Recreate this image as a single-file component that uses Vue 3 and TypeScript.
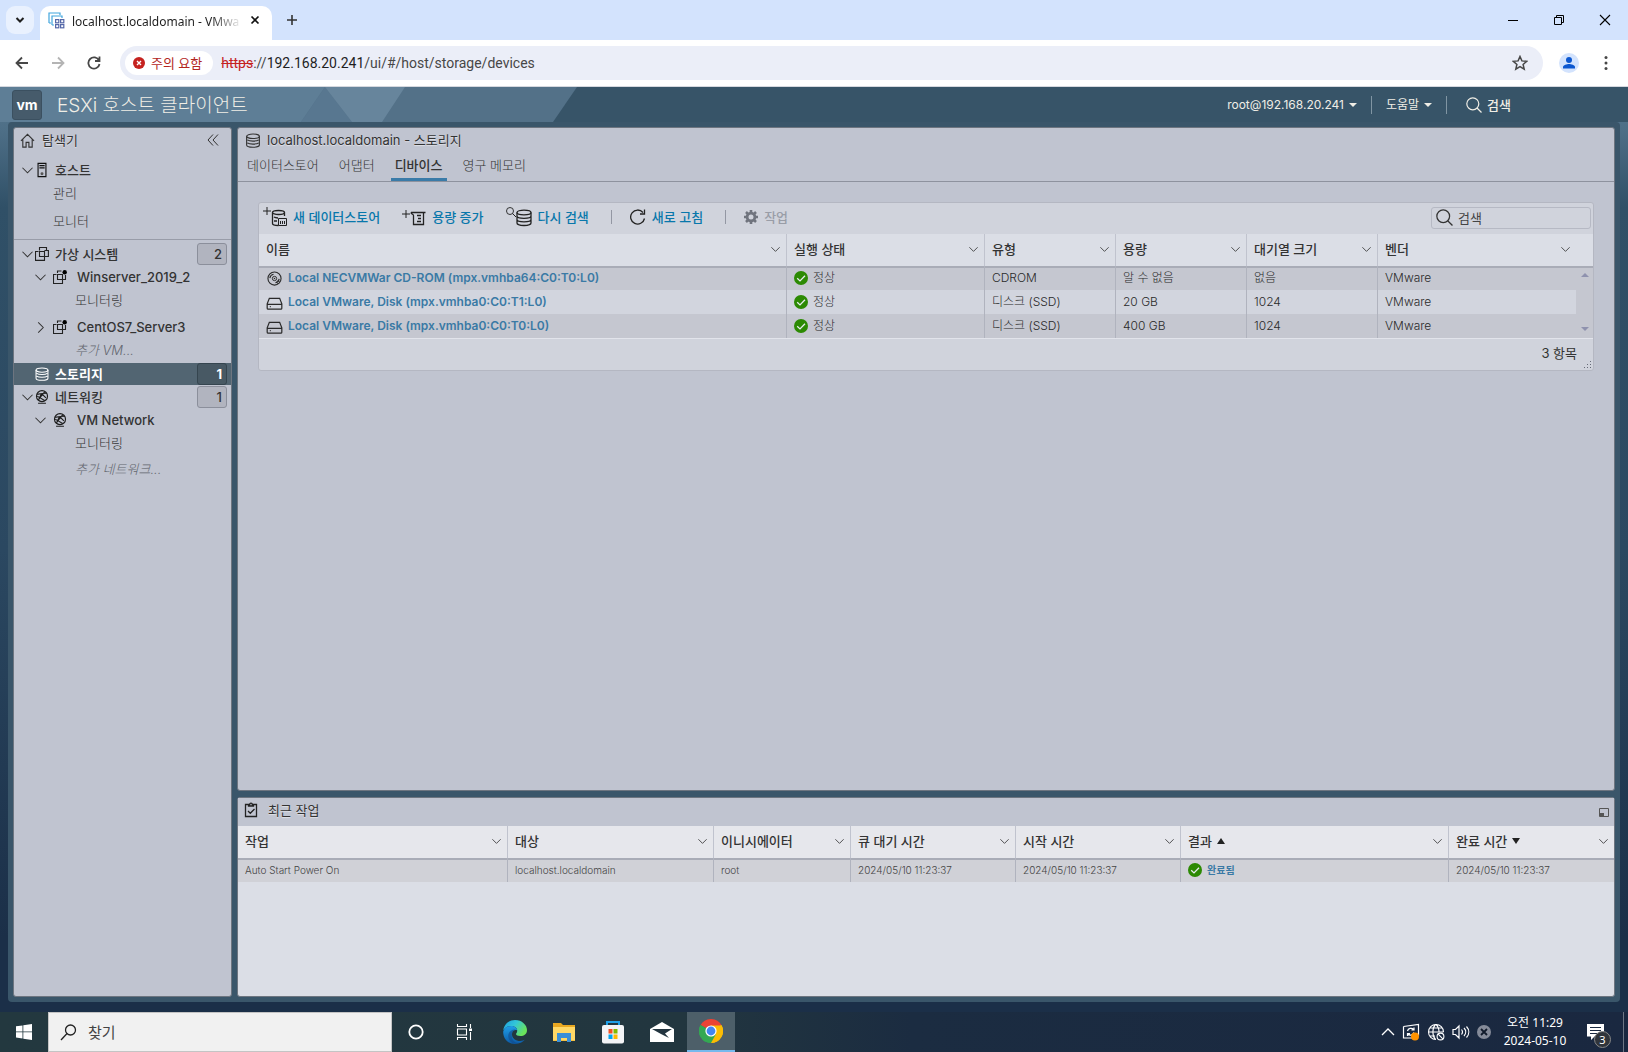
<script setup lang="ts">
interface NavRow {
  label: string
  kind: 'root' | 'child' | 'leaf' | 'deep'
  icon?: string
  open?: boolean
  badge?: number
  selected?: boolean
  add?: boolean
  spaced?: boolean
}

const hostRows: NavRow[] = [
  { label: '호스트', kind: 'root', icon: 'host', open: true },
  { label: '관리', kind: 'leaf' },
  { label: '모니터', kind: 'leaf', spaced: true },
]

const inventoryRows: NavRow[] = [
  { label: '가상 시스템', kind: 'root', icon: 'vm', open: true, badge: 2 },
  { label: 'Winserver_2019_2', kind: 'child', icon: 'vm-on', open: true },
  { label: '모니터링', kind: 'deep' },
  { label: 'CentOS7_Server3', kind: 'child', icon: 'vm-on', open: false, spaced: true },
  { label: '추가 VM...', kind: 'deep', add: true },
  { label: '스토리지', kind: 'root', icon: 'db', badge: 1, selected: true },
  { label: '네트워킹', kind: 'root', icon: 'net', open: true, badge: 1 },
  { label: 'VM Network', kind: 'child', icon: 'net', open: true },
  { label: '모니터링', kind: 'deep' },
  { label: '추가 네트워크...', kind: 'deep', add: true, spaced: true },
]

const tabs: string[] = ['데이터스토어', '어댑터', '디바이스', '영구 메모리']
const activeTab = '디바이스'

const deviceColumns: string[] = ['이름', '실행 상태', '유형', '용량', '대기열 크기', '벤더']
const devices = [
  { icon: 'cd', name: 'Local NECVMWar CD-ROM (mpx.vmhba64:C0:T0:L0)', status: '정상', type: 'CDROM', capacity: '알 수 없음', queue: '없음', vendor: 'VMware' },
  { icon: 'disk', name: 'Local VMware, Disk (mpx.vmhba0:C0:T1:L0)', status: '정상', type: '디스크 (SSD)', capacity: '20 GB', queue: '1024', vendor: 'VMware' },
  { icon: 'disk', name: 'Local VMware, Disk (mpx.vmhba0:C0:T0:L0)', status: '정상', type: '디스크 (SSD)', capacity: '400 GB', queue: '1024', vendor: 'VMware' },
]

const taskColumns = [
  { label: '작업', sort: '' },
  { label: '대상', sort: '' },
  { label: '이니시에이터', sort: '' },
  { label: '큐 대기 시간', sort: '' },
  { label: '시작 시간', sort: '' },
  { label: '결과', sort: 'asc' },
  { label: '완료 시간', sort: 'desc' },
]
</script>

<template>
  <div class="screen">
    <svg class="sprite" width="0" height="0" aria-hidden="true">
      <symbol id="i-chev" viewBox="0 0 12 12"><path d="M0.5 3l5.5 5.5L11.500 3" fill="none" stroke="currentColor" stroke-width="1.1" /></symbol>
      <symbol id="i-chev-r" viewBox="0 0 12 12"><path d="M3.500 0.500L9 6 3.500 11.500" fill="none" stroke="currentColor" stroke-width="1.100" /></symbol>
      <symbol id="i-home" viewBox="0 0 16 16"><path d="M1 8.500L8 1.500l7 7M3 7v8h3.500v-5h3v5H13V7" fill="none" stroke="currentColor" stroke-width="1.200" /></symbol>
      <symbol id="i-host" viewBox="0 0 16 16"><path d="M3.500 0.500h9v15h-9zM5 3h6M5 5.500h6" fill="none" stroke="#111" stroke-width="1.300" /><circle cx="8" cy="12.300" r="1.700" fill="#555" /></symbol>
      <symbol id="i-vm" viewBox="0 0 14 14"><path d="M4.500 3.500V.5h7v3M9.500 9.500h3.900v-6h-4M3.500 4.500H.5v8.900h9V9.500M4.500 4.500h5v5h-5zM4.500 4.500V9.500" fill="none" stroke="#222" stroke-width="1.100" /></symbol>
      <symbol id="i-vm-on" viewBox="0 0 14 14"><path d="M4.500 3V1h4M12.500 5v4.500H10M3.500 4.500H.5v9h9V9.500M4.500 4.500h5v5h-5z" fill="none" stroke="#222" stroke-width="1.100" /><circle cx="11.700" cy="2.200" r="2.200" fill="#000" /></symbol>
      <symbol id="i-db" viewBox="0 0 16 16"><g fill="none" stroke="currentColor" stroke-width="1.200"><ellipse cx="8" cy="3.500" rx="6.800" ry="2.400" /><path d="M1.200 3.500v9.300c0 1.200 3 2.400 6.800 2.400s6.800-1.200 6.800-2.400V3.500M2 7.300c1 .8 3 1.300 6 1.300s5-.5 6-1.300M2 10.500c1 .8 3 1.300 6 1.300s5-.5 6-1.300" /></g></symbol>
      <symbol id="i-net" viewBox="0 0 16 16"><g fill="none" stroke="#1c1c1c" stroke-width="1.300"><circle cx="8" cy="7" r="6.300" /><path d="M2.500 5l5-1 5 5M7.500 4l5.500-.5M7.500 4L4 11.500M2.500 7L11 12M11 2L4 11M3.500 15.200h9" /></g></symbol>
      <symbol id="i-cd" viewBox="0 0 16 16"><g fill="none" stroke="currentColor"><circle cx="8" cy="8" r="7" stroke-width="1.200" /><circle cx="8" cy="8" r="2.300" /><path d="M3 7.500a5 5 0 0 1 4-4M13 8.500a5 5 0 0 1-4 4M11.300 10l2 1.500M10 11.300l1.500 2" stroke-width="1.200" /></g><circle cx="8" cy="8" r=".8" fill="currentColor" /></symbol>
      <symbol id="i-disk" viewBox="0 0 18 16"><path d="M3.500 3.500h11l2.300 6v4.500a1 1 0 0 1-1 1H2.200a1 1 0 0 1-1-1V9.500zM1.200 10h15.600M4 12.500h1" fill="none" stroke="currentColor" stroke-width="1.300" /></symbol>
      <symbol id="i-ok" viewBox="0 0 14 14"><circle cx="7" cy="7" r="7" fill="#2c8a03" /><path d="M3.200 7.200l2.800 2.700 5-5.200" fill="none" stroke="#e9edf0" stroke-width="1.300" /></symbol>
      <symbol id="i-search" viewBox="0 0 16 16"><g fill="none" stroke="currentColor" stroke-width="1.200"><circle cx="6.800" cy="6.800" r="6" /><path d="M11 11l4.500 4.500" /></g></symbol>
    </svg>

    <div class="tabstrip">
      <button class="tab-search" aria-label="탭 검색">
        <svg width="12" height="12" viewBox="0 0 12 12"><path d="M2.500 4L6 7.500 9.500 4" fill="none" stroke="#1f1f1f" stroke-width="2" /></svg>
      </button>
      <div class="browser-tab">
        <svg width="17" height="17" viewBox="0 0 17 17" fill="none">
          <path d="M1 11V1h11v2M4 13V4h10v2M4 13h2" stroke="#41a5dd" stroke-width="1.200" />
          <path d="M1 11h2" stroke="#41a5dd" />
          <g stroke="#5568a8" stroke-width="1.200"><rect x="7.600" y="7.600" width="3.200" height="3.200" /><rect x="12.600" y="7.600" width="3.200" height="3.200" /><rect x="7.600" y="12.600" width="3.200" height="3.200" /><rect x="12.600" y="12.600" width="3.200" height="3.200" /></g>
        </svg>
        <span class="tab-title">localhost.localdomain - VMwa</span>
        <button class="plain" aria-label="닫기"><svg width="10" height="10" viewBox="0 0 10 10"><path d="M1.500 1.500l7 7M8.500 1.500l-7 7" stroke="#111" stroke-width="1.700" /></svg></button>
      </div>
      <button class="plain new-tab" aria-label="새 탭"><svg width="12" height="12" viewBox="0 0 12 12"><path d="M6 1v10M1 6h10" stroke="#333" stroke-width="1.600" /></svg></button>
      <div class="window-buttons">
        <button class="plain" aria-label="최소화"><svg width="12" height="12" viewBox="0 0 12 12"><path d="M1 6.500h10" stroke="#000" /></svg></button>
        <button class="plain" aria-label="이전 크기로"><svg width="12" height="12" viewBox="0 0 12 12"><path d="M1.500 3.500h7v7h-7zM3.500 3.500v-2h7v7h-2" fill="none" stroke="#000" /></svg></button>
        <button class="plain" aria-label="창 닫기"><svg width="12" height="12" viewBox="0 0 12 12"><path d="M1 1l10 10M11 1L1 11" stroke="#000" stroke-width="1.100" /></svg></button>
      </div>
    </div>

    <div class="toolbar">
      <button class="plain" aria-label="뒤로"><svg width="14" height="14" viewBox="0 0 14 14"><path d="M13 7H2M7 1.500L1.500 7 7 12.500" fill="none" stroke="#474747" stroke-width="1.800" /></svg></button>
      <button class="plain" aria-label="앞으로"><svg width="14" height="14" viewBox="0 0 14 14"><path d="M1 7h11M7 1.500L12.500 7 7 12.500" fill="none" stroke="#b4b4b4" stroke-width="1.800" /></svg></button>
      <button class="plain" aria-label="새로고침"><svg width="14" height="14" viewBox="0 0 14 14"><path d="M12 4.500A5.600 5.600 0 1 0 12.500 8M12.500 0.500v4.500H8" fill="none" stroke="#474747" stroke-width="1.800" /></svg></button>
      <div class="omnibox">
        <button class="warn">
          <svg width="12" height="12" viewBox="0 0 12 12"><circle cx="6" cy="6" r="6" fill="#c5221f" /><path d="M4 4l4 4M8 4L4 8" stroke="#fff" stroke-width="1.400" /></svg>
          주의 요함
        </button>
        <span class="url"><s>https</s>://<b>192.168.20.241</b>/ui/#/host/storage/devices</span>
        <svg class="star" width="16" height="16" viewBox="0 0 16 16"><path d="M8 1.500l1.900 4.400 4.800.4-3.600 3.100 1.100 4.700L8 11.600l-4.200 2.500 1.100-4.700L1.300 6.300l4.800-.4z" fill="none" stroke="#474747" stroke-width="1.500" /></svg>
      </div>
      <svg class="avatar" width="20" height="20" viewBox="0 0 20 20"><circle cx="10" cy="10" r="10" fill="#d3e3fd" /><circle cx="10" cy="7" r="3" fill="#0b57d0" /><path d="M4 15.500v-1.500c0-2 4-3 6-3s6 1 6 3v1.500z" fill="#0b57d0" /></svg>
      <svg width="4" height="16" viewBox="0 0 4 16" fill="#474747"><circle cx="2" cy="2.500" r="1.500" /><circle cx="2" cy="8" r="1.500" /><circle cx="2" cy="13.500" r="1.500" /></svg>
    </div>

    <div class="client">
      <header class="banner">
        <svg class="banner-art" width="577" height="35" viewBox="0 0 577 35" preserveAspectRatio="none">
          <path d="M0 0h577l-24 35H0z" fill="#537188" />
          <path d="M0 0h325l-24 35H0z" fill="#5e7e96" />
          <path d="M325 0l27 35h-51z" fill="#587790" />
          <path d="M325 0h80l-23 35h-30z" fill="#67859c" />
        </svg>
        <span class="logo">vm</span>
        <h1>ESXi 호스트 클라이언트</h1>
        <nav class="banner-nav">
          <button>root@192.168.20.241 <i class="caret"></i></button>
          <button>도움말 <i class="caret"></i></button>
          <button class="find"><svg width="16" height="16"><use href="#i-search" /></svg>검색</button>
        </nav>
      </header>

      <div class="workspace">
        <aside class="panel navigator">
          <div class="nav-title">
            <svg width="15" height="15"><use href="#i-home" /></svg>
            <span>탐색기</span>
            <button class="plain" aria-label="접기"><svg width="12" height="12" viewBox="0 0 12 12"><path d="M6 0.500L1 6l5 5.500M11 0.500L6 6l5 5.500" fill="none" stroke="#333" /></svg></button>
          </div>
          <template v-for="(group, g) in [hostRows, inventoryRows]" :key="g">
            <ul class="tree">
              <li v-for="(row, i) in group" :key="i" :class="[row.kind, { selected: row.selected, add: row.add, spaced: row.spaced }]">
                <svg v-if="row.icon" class="twist" width="11" height="11"><use v-if="row.open !== undefined" :href="row.open ? '#i-chev' : '#i-chev-r'" /></svg>
                <svg v-if="row.icon" class="glyph" width="14" :height="row.icon === 'host' ? 16 : 14"><use :href="'#i-' + row.icon" /></svg>
                <a href="#">{{ row.label }}</a>
                <span v-if="row.badge" class="badge">{{ row.badge }}</span>
              </li>
            </ul>
          </template>
        </aside>

        <div class="column">
          <main class="panel content">
            <div class="content-title"><svg width="16" height="15"><use href="#i-db" /></svg>localhost.localdomain - 스토리지</div>
            <div class="tabs">
              <button v-for="t in tabs" :key="t" :class="{ active: t === activeTab }">{{ t }}</button>
            </div>
            <section class="grid">
              <div class="actions">
                <button>
                  <svg width="24" height="20" viewBox="0 0 24 20" fill="none" stroke="#222"><path d="M4 0v8M0 4h8" /><ellipse cx="15.500" cy="5.500" rx="6" ry="2" stroke-width="1.300" /><path d="M9.500 5.500v11c0 1 2 2 6 2M21.500 5.500V9M11 10c1 .7 2 .9 4 1M11 14h3" stroke-width="1.300" /><path d="M15.500 11.500h8v7h-8zM17.500 14v3M19.500 14v3M21.500 14v3" /></svg>
                  새 데이터스토어
                </button>
                <button>
                  <svg width="24" height="20" viewBox="0 0 24 20" fill="none" stroke="#222"><path d="M4 3v8M0 7h8" /><path d="M9 5.500h14.500M9 5.500c0 2 2.500 1.500 2.500 3v9h10v-12M15 8.500h4M16 11.500h3M15 14.500h4" stroke-width="1.300" /></svg>
                  용량 증가
                </button>
                <button>
                  <svg width="26" height="20" viewBox="0 0 26 20" fill="none" stroke="#222"><circle cx="4" cy="4" r="3.500" stroke-width=".9" /><path d="M6.500 6.500L10 10" /><ellipse cx="18" cy="5.500" rx="7" ry="2.300" stroke-width="1.300" /><path d="M11 5.500V16c0 1.300 3 2.500 7 2.500s7-1.200 7-2.500V5.500M11 9c0 1.300 3 2.300 7 2.300s7-1 7-2.300M11 12.500c0 1.300 3 2.300 7 2.300s7-1 7-2.300" stroke-width="1.300" /></svg>
                  다시 검색
                </button>
                <i class="rule"></i>
                <button>
                  <svg width="16" height="16" viewBox="0 0 16 16"><path d="M14.500 9.500A7 7 0 1 1 13 3.500M14.500 0.500v4.500H10" fill="none" stroke="#222" stroke-width="1.300" /></svg>
                  새로 고침
                </button>
                <i class="rule"></i>
                <button disabled>
                  <svg width="14" height="14" viewBox="0 0 14 14"><circle cx="7" cy="7" r="3.900" fill="none" stroke="#70747e" stroke-width="2.800" /><path d="M7 0v2.500M7 11.500V14M0 7h2.500M11.500 7H14M2 2l1.800 1.800M10.200 10.200L12 12M12 2l-1.800 1.800M3.800 10.200L2 12" stroke="#70747e" stroke-width="2.600" /></svg>
                  작업
                </button>
                <label class="search"><svg width="17" height="17"><use href="#i-search" /></svg><input type="text" placeholder="검색" aria-label="검색" /></label>
              </div>
              <table class="devices">
                <colgroup><col class="c-name" /><col class="c-status" /><col class="c-small" /><col class="c-small" /><col class="c-small" /><col /><col class="c-scroll" /></colgroup>
                <thead>
                  <tr>
                    <th v-for="c in deviceColumns" :key="c"><div class="head">{{ c }}<svg width="9" height="9"><use href="#i-chev" /></svg></div></th>
                    <th></th>
                  </tr>
                </thead>
                <tbody>
                  <tr v-for="(d, i) in devices" :key="d.name">
                    <td><div class="cell"><svg :class="d.icon" width="17" height="15"><use :href="'#i-' + d.icon" /></svg><a href="#">{{ d.name }}</a></div></td>
                    <td><div class="cell"><svg width="14" height="14"><use href="#i-ok" /></svg>{{ d.status }}</div></td>
                    <td>{{ d.type }}</td>
                    <td>{{ d.capacity }}</td>
                    <td>{{ d.queue }}</td>
                    <td>{{ d.vendor }}</td>
                    <td v-if="i === 0" rowspan="3" class="scroll"><div><i class="up"></i><i class="down"></i></div></td>
                  </tr>
                </tbody>
              </table>
              <div class="grid-foot">3 항목
                <svg class="grip" width="8" height="8" viewBox="0 0 8 8" fill="#666b78"><path d="M6 0h1v1H6zM3 3h1v1H3zM6 3h1v1H6zM0 6h1v1H0zM3 6h1v1H3zM6 6h1v1H6z" /></svg>
              </div>
            </section>
          </main>

          <section class="panel tasks">
            <div class="tasks-title">
              <svg width="14" height="16" viewBox="0 0 14 16" fill="none" stroke="#222" stroke-width="1.300"><path d="M4 2.500H1.500v12h11v-12H10M4.500 4V2.500h1.200a1.300 1.300 0 0 1 2.600 0h1.200V4zM4 9l2.300 2.300L10.500 7" /></svg>
              <span>최근 작업</span>
              <button class="plain" aria-label="크기 조정"><svg width="10" height="9" viewBox="0 0 10 9"><path d="M.5.500h9v8h-9z" fill="none" stroke="#555" /><path d="M1 5h4v3H1z" fill="#555" /></svg></button>
            </div>
            <table class="task-table">
              <colgroup><col class="t-name" /><col class="t-target" /><col class="t-init" /><col class="t-time" /><col class="t-time" /><col class="t-result" /><col /></colgroup>
              <thead>
                <tr>
                  <th v-for="c in taskColumns" :key="c.label"><div class="head">{{ c.label }}<i v-if="c.sort" :class="['sort', c.sort]"></i><svg width="9" height="9"><use href="#i-chev" /></svg></div></th>
                </tr>
              </thead>
              <tbody>
                <tr>
                  <td>Auto Start Power On</td>
                  <td>localhost.localdomain</td>
                  <td>root</td>
                  <td>2024/05/10 11:23:37</td>
                  <td>2024/05/10 11:23:37</td>
                  <td><div class="cell"><svg width="14" height="14"><use href="#i-ok" /></svg><a href="#">완료됨</a></div></td>
                  <td>2024/05/10 11:23:37</td>
                </tr>
              </tbody>
            </table>
          </section>
        </div>
      </div>
    </div>

    <footer class="taskbar">
      <button class="start" aria-label="시작"><svg width="16" height="16" viewBox="0 0 16 16" fill="#fff"><path d="M0 2.300l6.500-.9v6.100H0zM7.300 1.300L16 0v7.500H7.300zM0 8.300h6.500v6.200L0 13.600zM7.300 8.300H16V16l-8.700-1.300z" /></svg></button>
      <label class="taskbar-search"><svg width="17" height="17" viewBox="0 0 17 17"><g fill="none" stroke="#222" stroke-width="1.300"><circle cx="10.500" cy="6" r="5" /><path d="M7 9.500L1 16" /></g></svg><input type="text" placeholder="찾기" aria-label="찾기" /></label>
      <button aria-label="Cortana"><svg width="16" height="16" viewBox="0 0 16 16"><circle cx="8" cy="8" r="6.700" fill="none" stroke="#fff" stroke-width="1.800" /></svg></button>
      <button aria-label="작업 보기"><svg width="17" height="16" viewBox="0 0 17 16" fill="none" stroke="#fff" stroke-width="1.100"><path d="M1.500 0v2.500h9V0M1.500 5h9v6h-9zM1.500 16v-2.500h9V16M14.500 0v4M14.500 8v8" /><path d="M13 4.500h3v2.500h-3z" fill="#fff" stroke="none" /></svg></button>
      <div class="apps">
        <button aria-label="Edge">
          <svg width="24" height="24" viewBox="0 0 24 24">
            <defs>
              <linearGradient id="eg1" x1="0" y1="0" x2="1" y2=".5"><stop offset="0" stop-color="#1b9de2" /><stop offset=".5" stop-color="#33c6d8" /><stop offset="1" stop-color="#6ae35a" /></linearGradient>
              <linearGradient id="eg2" x1="0" y1="0" x2="0" y2="1"><stop offset="0" stop-color="#1f9ee8" /><stop offset="1" stop-color="#0c59a4" /></linearGradient>
            </defs>
            <path d="M.3 10.500C1 4.500 6 0 12 0c7 0 12 5 12 10 0 4-3 6-6.500 6-3 0-4.500-1-4.500-2 0-.8 1.200-1 1.200-3.200C14.200 8 11.500 6 8 6 4 6 1.300 8.500.3 10.500z" fill="url(#eg1)" />
            <path d="M.2 11.500C1 8.500 4 6 8 6c3.500 0 6 2 6.200 4.500C13 9.500 9 10 9 14.500c0 4 4 6.500 8 6.500 2.500 0 4-.8 4.800-1.200C20 22 16.500 24 12 24 5 24 0 18.500.2 11.500z" fill="url(#eg2)" />
            <path d="M9 14.500c-1 4 2 8 6 9-6 1.500-11-4-9.500-9.500C6.500 10.500 10 9 13 9.500c-2.500.5-4 2.500-4 5z" fill="#114a8b" opacity=".6" />
          </svg>
        </button>
        <button aria-label="파일 탐색기"><svg width="22" height="20" viewBox="0 0 22 20"><path d="M0 1h8l2 2h12v16H0z" fill="#e9a821" /><path d="M0 5h22v13.500H0z" fill="#ffd866" /><path d="M4 11h14v9h-4v-4H8v4H4z" fill="#3a8fd8" /></svg></button>
        <button aria-label="Store"><svg width="24" height="24" viewBox="0 0 24 24"><path d="M6 8V2h12v6" fill="none" stroke="#1fa0e8" stroke-width="2" /><rect x="1" y="5" width="22" height="18.500" rx="2" fill="#f3f4f6" /><path d="M7.500 9h4v4.500h-4z" fill="#f25022" /><path d="M12.500 9h4v4.500h-4z" fill="#7fba00" /><path d="M7.500 14.500h4V19h-4z" fill="#00a4ef" /><path d="M12.500 14.500h4V19h-4z" fill="#ffb900" /></svg></button>
        <button aria-label="메일"><svg width="24" height="20" viewBox="0 0 24 20"><path d="M0 7L12 0l12 7v13H0z" fill="#fff" /><path d="M2 7l20 0-7 4.500 4 4.500-8-4z" fill="#22343f" /></svg></button>
        <button class="running" aria-label="Chrome"><svg width="24" height="24" viewBox="0 0 24 24"><path d="M12 12L1.600 6A12 12 0 0 1 22.400 6z" fill="#ea4335" /><path d="M12 12L22.400 6A12 12 0 0 1 12 24z" fill="#fbbc04" /><path d="M12 12v12A12 12 0 0 1 1.600 6z" fill="#34a853" /><path d="M12 6.500h10.700A12 12 0 0 1 12 24l5-9z" fill="#fbbc04" /><path d="M1.600 6l5.200 9L12 17.500l5-2.500-5 9A12 12 0 0 1 1.600 6z" fill="#34a853" /><circle cx="12" cy="12" r="5.600" fill="#fff" /><circle cx="12" cy="12" r="4.400" fill="#4285f4" /></svg></button>
      </div>
      <div class="tray">
        <svg width="14" height="16" viewBox="0 0 14 16"><path d="M1 11l6-6 6 6" fill="none" stroke="#fff" stroke-width="1.300" /></svg>
        <svg width="18" height="18" viewBox="0 0 18 18"><path d="M1.500 3.500L16.500 1.500v11M1.500 3.500v11.500H11" fill="none" stroke="#fff" stroke-width="1.200" /><path d="M5.500 8a3.500 3.500 0 0 1 6-1.500M12 4.500v2.500H9.500M11.800 9.500a3.500 3.500 0 0 1-6 1.500M5.500 13v-2.300H8" fill="none" stroke="#fff" stroke-width="1.200" /><circle cx="13" cy="13.500" r="4" fill="#ff9300" /></svg>
        <svg width="18" height="18" viewBox="0 0 18 18" fill="none" stroke="#fff" stroke-width="1.100"><path d="M9 16.500A7.500 7.500 0 1 1 16.500 9M8.500 1.500C5 5 5 13 8.500 16.500M9 1.500c2.200 2 3 4.500 3 7.500M1.500 9h15M2.500 5h13M2.500 13H8" /><circle cx="13.500" cy="13.500" r="3.400" /><path d="M11.200 11.200l4.600 4.600" /></svg>
        <svg width="18" height="16" viewBox="0 0 18 16" fill="none" stroke="#fff" stroke-width="1.200"><path d="M1 5.500h2.500L7 2v12l-3.500-3.500H1zM9.500 5.500c1.200 1.500 1.200 3.500 0 5M12 4c2.200 2.300 2.200 5.700 0 8M14.500 2.500c3 3.300 3 7.700 0 11" /></svg>
        <svg width="14" height="14" viewBox="0 0 14 14"><circle cx="7" cy="7" r="7" fill="#858b99" /><path d="M4 4l6 6M10 4l-6 6" stroke="#111b2b" stroke-width="1.800" /></svg>
      </div>
      <div class="clock"><span>오전 11:29</span><span>2024-05-10</span></div>
      <button class="notice" aria-label="알림"><svg width="17" height="16" viewBox="0 0 17 16"><path d="M0 0h17v12.500H7.500L4 16v-3.500H0z" fill="#fff" /><path d="M3 3.500h11M3 6.500h11M3 9.500h8" stroke="#1b2a42" /></svg><span>3</span></button>
      <i class="peek"></i>
    </footer>
  </div>
</template>

<style>
html,
body {
  margin: 0;
}
</style>

<style scoped>
.screen {
  display: flex;
  flex-direction: column;
  min-height: 100vh;
  overflow: hidden;
  font-family: Inter, "Noto Sans CJK KR", sans-serif;
  font-size: 13px;
  line-height: 18px;
  color: #333;
}
.screen *,
.screen *::before {
  box-sizing: border-box;
}
.sprite {
  position: absolute;
}
svg {
  flex: none;
  display: block;
}
button {
  font: inherit;
  color: inherit;
  background: none;
  border: 0;
  padding: 0;
  white-space: nowrap;
}
a {
  color: inherit;
  text-decoration: none;
}
.plain {
  display: flex;
}

/* browser frame */
.tabstrip {
  display: flex;
  height: 40px;
  padding-left: 6px;
  background: #d3e3fd;
  font-family: "Noto Sans", "Noto Sans CJK KR", sans-serif;
  font-size: 12px;
}
.tab-search {
  display: flex;
  align-items: center;
  justify-content: center;
  width: 28px;
  height: 28px;
  margin-top: 6px;
  border-radius: 9px;
  background: #e9f1fe;
}
.browser-tab {
  display: flex;
  align-items: center;
  width: 232px;
  height: 34px;
  margin: 6px 14px 0 6px;
  padding: 0 12px 6px 8px;
  border-radius: 10px 10px 0 0;
  background: #fff;
}
.tab-title {
  flex: 1;
  margin: 3px 8px 0 7px;
  color: #1f1f1f;
  white-space: nowrap;
  mask-image: linear-gradient(90deg, #000 82%, transparent);
}
.new-tab {
  margin-top: 14px;
}
.window-buttons {
  display: flex;
  gap: 34px;
  margin: 14px 17px 0 auto;
}
.toolbar {
  display: flex;
  align-items: center;
  height: 47px;
  padding: 0 20px 1px 15px;
  background: #fff;
  border-bottom: 1px solid #d5d8df;
}
.toolbar > .plain {
  margin-right: 22px;
}
.omnibox {
  display: flex;
  flex: 1;
  align-items: center;
  height: 34px;
  padding: 0 15px 0 5px;
  border-radius: 17px;
  background: #ebeef8;
  font-family: "Noto Sans", "Noto Sans CJK KR", sans-serif;
}
.toolbar > .plain + .omnibox {
  margin-left: -3px;
}
.warn {
  display: flex;
  align-items: center;
  gap: 6px;
  height: 24px;
  padding: 0 11px 0 8px;
  border-radius: 12px;
  background: #fff;
  color: #b3261e;
}
.url {
  flex: 1;
  margin-left: 8px;
  color: #474747;
  font-family: Roboto, sans-serif;
  font-size: 14px;
}
.url s {
  color: #c5221f;
}
.url b {
  color: #1f1f1f;
  font-weight: 400;
}
.avatar {
  margin: 0 25px 0 16px;
}

/* host client */
.client {
  display: flex;
  flex: 1;
  flex-direction: column;
  padding: 0 8px 10px;
  background: linear-gradient(#58788f 0, #4d6e86 45px, #305067 120px, #2b4861 50%, #1b2f48 92%);
}
.banner {
  position: relative;
  display: flex;
  align-items: center;
  height: 35px;
  margin: 0 -8px;
  padding: 0 117px 0 12px;
  background: #375468;
  color: #f0eee6;
}
.banner-art {
  position: absolute;
  top: 0;
  left: 0;
}
.logo {
  position: relative;
  width: 30px;
  height: 30px;
  border: 1px solid #3b5060;
  border-radius: 3px;
  background: #465b6b;
  color: #fff;
  font-size: 14px;
  font-weight: 700;
  line-height: 27px;
  text-align: center;
}
h1 {
  position: relative;
  margin: 0 0 0 15px;
  padding-top: 2px;
  font-size: 19px;
  font-weight: 300;
  line-height: 24px;
}
.banner-nav {
  display: flex;
  align-items: center;
  margin-left: auto;
  font-size: 12px;
  text-shadow: 0 1px 1px #1c2f3c;
}
.banner-nav button {
  display: flex;
  align-items: center;
  height: 18px;
  padding: 0 14px;
  border-right: 1px solid #8095a3;
}
.banner-nav button.find {
  gap: 5px;
  padding: 0 0 0 19px;
  border: 0;
  font-weight: 500;
  font-size: 13px;
}
.caret {
  margin-left: 5px;
  border: 4px solid transparent;
  border-top-color: #f0eee6;
  border-bottom: 0;
}
.workspace {
  display: flex;
  flex: 1;
  gap: 5px;
  padding: 5px;
  border-radius: 4px;
  background: #3a566a;
}
.panel {
  border: 1px solid #6d7580;
  border-radius: 3px;
  background: #c0c4d0;
}
.column {
  display: flex;
  flex: 1;
  flex-direction: column;
  gap: 6px;
  min-width: 0;
}
.navigator {
  width: 219px;
}
.nav-title {
  display: flex;
  align-items: center;
  gap: 7px;
  height: 24px;
  margin-bottom: 7px;
  padding: 0 12px 0 6px;
  text-shadow: 0 1px 1px #fff8;
}
.nav-title .plain {
  margin-left: auto;
}
.tree {
  margin: 0;
  padding: 0;
  list-style: none;
}
.tree + .tree {
  margin-top: 6px;
  padding-top: 3px;
  border-top: 1px solid #989ca8;
}
.tree li {
  display: flex;
  align-items: center;
  height: 22px;
  padding-left: 8px;
  font-weight: 500;
}
.tree li.child {
  height: 24px;
  padding-left: 21px;
}
.tree li.leaf {
  height: 24px;
  padding-left: 39px;
  font-weight: 300;
}
.tree li.deep {
  padding-left: 61px;
  font-weight: 300;
}
.tree li.spaced {
  margin-top: 4px;
}
.tree .glyph {
  margin: 0 6px 0 2px;
}
.tree .child .twist {
  margin-right: 5px;
}
.tree .child .glyph {
  margin-right: 10px;
}
.tree li.add {
  color: #63666f;
  font-style: italic;
}
.tree li.selected {
  margin: 2px 0 1px;
  background: #526572;
  color: #fff;
  font-weight: 700;
}
.badge {
  width: 30px;
  height: 22px;
  margin: 0 4px 0 auto;
  padding-right: 4px;
  border: 1px solid #8b8f9b;
  border-radius: 3px;
  background: #b1b4bf;
  line-height: 20px;
  text-align: right;
}
.selected .badge {
  border-color: #35454f;
  background: #485964;
}

/* main content */
.content {
  flex: 1;
}
.content-title {
  display: flex;
  align-items: center;
  gap: 6px;
  height: 24px;
  padding-left: 7px;
  text-shadow: 0 1px 1px #fff8;
}
.tabs {
  display: flex;
  gap: 12px;
  height: 30px;
  padding-left: 5px;
  border-bottom: 1px solid #8e929e;
}
.tabs button {
  padding: 0 4px 1px;
  border-bottom: 3px solid transparent;
  font-weight: 300;
}
.tabs .active {
  border-bottom-color: #3a7ba8;
  font-weight: 500;
}
.grid {
  margin: 20px 20px 0;
  border: 1px solid #b4b7c2;
  border-radius: 3px;
  background: #d0d3dc;
}
.actions {
  display: flex;
  align-items: center;
  gap: 22px;
  height: 31px;
  padding: 0 2px 4px 4px;
}
.actions button {
  display: flex;
  align-items: center;
  gap: 6px;
  color: #0877ab;
  font-weight: 500;
}
.actions button:disabled {
  color: #999da7;
}
.rule {
  width: 1px;
  height: 14px;
  margin-right: -4px;
  background: #9397a3;
}
.search {
  display: flex;
  align-items: center;
  gap: 5px;
  width: 160px;
  height: 22px;
  margin: 2px 0 0 auto;
  padding-left: 4px;
  border: 1px solid #b6b9c4;
  border-radius: 3px;
}
input {
  flex: 1;
  min-width: 0;
  padding: 0;
  border: 0;
  outline: 0;
  background: none;
  font: inherit;
}
input::placeholder {
  color: #444;
  opacity: 1;
}
table {
  width: 100%;
  border-collapse: separate;
  border-spacing: 0;
  table-layout: fixed;
}
th,
td {
  padding: 0 6px 0 7px;
  border-right: 1px solid #b0b3be;
  text-align: left;
  white-space: nowrap;
}
th {
  height: 32px;
  padding-bottom: 2px;
  border-color: #c0c3ce;
  background: #dbdee6;
  font-weight: 500;
}
th:last-child,
td:last-child {
  border-right: 0;
}
.head {
  display: flex;
  align-items: center;
}
.head svg {
  margin-left: auto;
}
td {
  height: 24px;
  color: #2a2a2a;
  font-weight: 300;
  font-size: 12px;
}
tbody tr:first-child td {
  box-shadow: inset 0 2px #a9acb7;
}
.cell {
  display: flex;
  align-items: center;
  gap: 5px;
}
.cell a {
  color: #3a7aa5;
  font-weight: 600;
}
.c-name { width: 528px; }
.c-status { width: 198px; }
.c-small { width: 131px; }
.c-scroll { width: 17px; }
.devices th:nth-last-child(2) {
  border-right: 0;
}
.devices tbody tr {
  background: #c5c7d0;
}
.devices tbody tr:nth-child(2) {
  background: #d2d5de;
}
.devices td:nth-child(6),
.devices tr:nth-child(n + 2) td:last-child {
  border-right: 0;
}
.devices td.scroll {
  height: 72px;
  padding: 0;
}
.scroll div {
  display: flex;
  flex-direction: column;
  align-items: center;
  justify-content: space-between;
  height: 72px;
  padding: 7px 0;
}
.up,
.down {
  border: 4px solid transparent;
}
.up {
  border-top: 0;
  border-bottom-color: #8f92ae;
}
.down {
  border-bottom: 0;
  border-top-color: #8f92ae;
}
.grid-foot {
  position: relative;
  height: 32px;
  padding-right: 16px;
  border-top: 1px solid #e2e4eb;
  line-height: 28px;
  text-align: right;
}
.grip {
  position: absolute;
  right: 1px;
  bottom: 1px;
}

/* recent tasks */
.tasks {
  height: 200px;
  background: #dbdee6;
}
.tasks-title {
  display: flex;
  align-items: center;
  gap: 10px;
  height: 28px;
  padding: 0 5px 4px 6px;
  background: #c0c4d0;
  text-shadow: 0 1px 1px #fff8;
}
.tasks-title .plain {
  margin: 4px 0 0 auto;
}
.task-table th {
  background: #e6e7ec;
}
.task-table td {
  padding-bottom: 1px;
  background: #d0d1d7;
  color: #444;
  font-size: 10px;
}
.t-name { width: 270px; }
.t-target { width: 206px; }
.t-init { width: 137px; }
.t-time { width: 165px; }
.t-result { width: 268px; }
.sort {
  margin-left: 5px;
  border: 4px solid transparent;
}
.asc {
  border-top: 0;
  border-bottom: 6px solid #222;
}
.desc {
  border-bottom: 0;
  border-top: 6px solid #222;
}

/* desktop taskbar */
.taskbar {
  display: flex;
  height: 40px;
  background: linear-gradient(90deg, #23383f, #22363f 42%, #1b2c41 56%, #1a2840);
  color: #fff;
  font-family: "Noto Sans", "Noto Sans CJK KR", sans-serif;
}
.taskbar > button,
.apps button {
  display: flex;
  align-items: center;
  justify-content: center;
  width: 48px;
}
.taskbar-search {
  display: flex;
  align-items: center;
  gap: 11px;
  width: 344px;
  padding-left: 11px;
  border: 1px solid #c4c4c4;
  background: #f1f1f1;
  font-size: 15px;
}
.apps {
  display: flex;
  gap: 1px;
  margin-left: 3px;
}
.apps .running {
  border-bottom: 2px solid #76b9ed;
  background: #4d5f69;
}
.tray {
  display: flex;
  align-items: center;
  gap: 7px;
  margin: 0 10px 0 auto;
}
.clock {
  display: flex;
  flex-direction: column;
  justify-content: center;
  width: 68px;
  font-size: 12px;
  text-align: center;
}
.taskbar > .notice {
  position: relative;
  margin: 0 3px 0 1px;
  width: 50px;
}
.notice span {
  position: absolute;
  right: 9px;
  bottom: 4px;
  width: 17px;
  height: 17px;
  border: 1px solid #888;
  border-radius: 9px;
  background: #2f343b;
  font-size: 11px;
  line-height: 15px;
}
.peek {
  width: 5px;
  border-left: 1px solid #6d7684;
}
</style>
